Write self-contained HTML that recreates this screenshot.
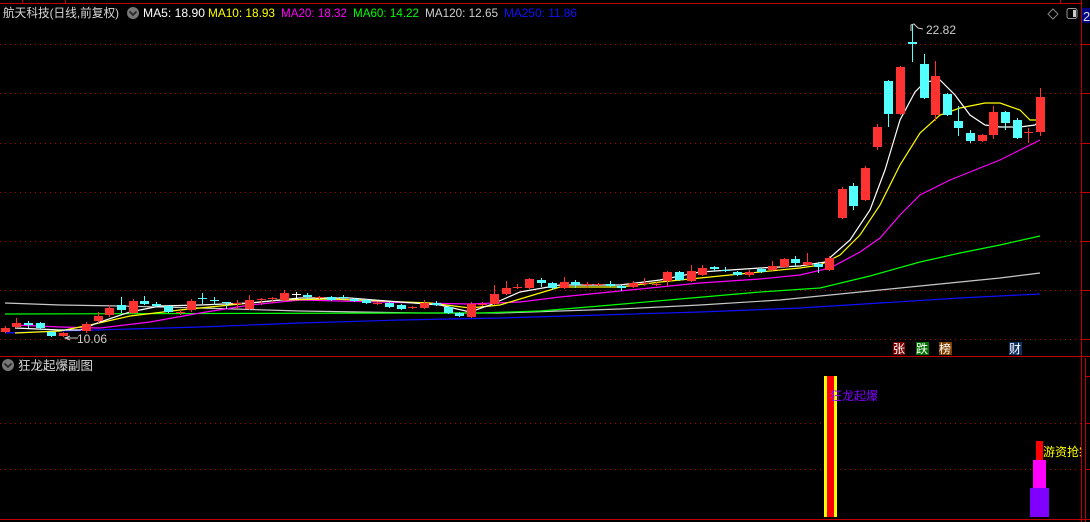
<!DOCTYPE html>
<html><head><meta charset="utf-8"><style>
html,body{margin:0;padding:0;background:#000;width:1090px;height:522px;overflow:hidden}
svg{display:block}
text{font-family:"Liberation Sans","Noto Sans CJK SC",sans-serif}
</style></head><body>
<svg id="s" width="1090" height="522" xmlns="http://www.w3.org/2000/svg">
<rect width="1090" height="522" fill="#000"/>
<g stroke="#c00000" stroke-width="1" fill="none">
<line x1="0" y1="3.5" x2="1081" y2="3.5"/>
<line x1="1081.5" y1="0" x2="1081.5" y2="522"/>
<line x1="0" y1="356.5" x2="1090" y2="356.5"/>
<line x1="0" y1="519.5" x2="1090" y2="519.5"/>
<line x1="1085.5" y1="358" x2="1085.5" y2="522"/>
</g>
<g stroke="#b00000" stroke-dasharray="1,4" stroke-width="1">
<line x1="0" y1="44.5" x2="1081" y2="44.5"/>
<line x1="0" y1="93.5" x2="1081" y2="93.5"/>
<line x1="0" y1="143.5" x2="1081" y2="143.5"/>
<line x1="0" y1="192.5" x2="1081" y2="192.5"/>
<line x1="0" y1="241.5" x2="1081" y2="241.5"/>
<line x1="0" y1="290.5" x2="1081" y2="290.5"/>
<line x1="0" y1="339.5" x2="1081" y2="339.5"/>
<line x1="0" y1="423.5" x2="1081" y2="423.5"/>
<line x1="0" y1="469.5" x2="1081" y2="469.5"/>
</g>
<g stroke="#c00000">
<line x1="1082" y1="44.5" x2="1090" y2="44.5"/><line x1="1082" y1="93.5" x2="1090" y2="93.5"/>
<line x1="1082" y1="143.5" x2="1090" y2="143.5"/><line x1="1082" y1="192.5" x2="1090" y2="192.5"/>
<line x1="1082" y1="241.5" x2="1090" y2="241.5"/><line x1="1082" y1="290.5" x2="1090" y2="290.5"/>
<line x1="1082" y1="339.5" x2="1090" y2="339.5"/><line x1="1086" y1="376.5" x2="1090" y2="376.5"/>
<line x1="1086" y1="423.5" x2="1090" y2="423.5"/><line x1="1086" y1="469.5" x2="1090" y2="469.5"/>
<line x1="22.5" y1="0" x2="22.5" y2="3"/><line x1="65.5" y1="0" x2="65.5" y2="3"/>
<line x1="1060.5" y1="0" x2="1060.5" y2="3"/>
</g>
<g id="ma" fill="none" stroke-width="1.2"></g>
<g id="cd"></g>
<!-- header -->
<text x="3" y="17" font-size="12" fill="#d8d8d8" textLength="116" lengthAdjust="spacingAndGlyphs">航天科技(日线,前复权)</text>
<circle cx="133" cy="13" r="6" fill="#777"/>
<path d="M129.5 11.5 L133 15 L136.5 11.5" stroke="#222" stroke-width="1.6" fill="none"/>
<text x="143" y="17" font-size="12" fill="#fff" textLength="62" lengthAdjust="spacingAndGlyphs">MA5: 18.90</text>
<text x="208" y="17" font-size="12" fill="#ffff00" textLength="67" lengthAdjust="spacingAndGlyphs">MA10: 18.93</text>
<text x="281" y="17" font-size="12" fill="#ff00ff" textLength="66" lengthAdjust="spacingAndGlyphs">MA20: 18.32</text>
<text x="353" y="17" font-size="12" fill="#00ff00" textLength="66" lengthAdjust="spacingAndGlyphs">MA60: 14.22</text>
<text x="425" y="17" font-size="12" fill="#d0d0d0" textLength="73" lengthAdjust="spacingAndGlyphs">MA120: 12.65</text>
<text x="504" y="17" font-size="12" fill="#1010ff" textLength="73" lengthAdjust="spacingAndGlyphs">MA250: 11.86</text>
<!-- top right icons -->
<path d="M1053 9 L1058 14 L1053 19 L1048 14 Z" stroke="#888" fill="none"/>
<rect x="1067" y="8.5" width="10" height="10" rx="2" stroke="#999" fill="none"/>
<rect x="1073" y="10" width="3" height="7" fill="#ccc"/>
<rect x="1082" y="8" width="8" height="15" fill="#000080"/>
<text x="1083" y="21" font-size="13" fill="#ddd">2</text>
<!-- labels -->
<path d="M911 31 L911 25 L914 24 L918 28 L923 29" stroke="#ccc" fill="none"/>
<text x="926" y="34" font-size="12" fill="#ccc">22.82</text>
<path d="M70 336 L65 338 L70 340 M65 338 L78 338" stroke="#ccc" fill="none"/>
<text x="77" y="343" font-size="12" fill="#ccc">10.06</text>
<!-- badges -->
<rect x="893" y="342" width="12" height="13" fill="#800000"/><text x="893" y="353" font-size="12" fill="#fff">张</text>
<rect x="916" y="342" width="13" height="13" fill="#007000"/><text x="916" y="353" font-size="12" fill="#fff">跌</text>
<rect x="939" y="342" width="13" height="13" fill="#804000"/><text x="939" y="353" font-size="12" fill="#fff">榜</text>
<rect x="1009" y="342" width="13" height="13" fill="#103060"/><text x="1009" y="353" font-size="12" fill="#fff">财</text>
<!-- sub panel -->
<circle cx="8" cy="365" r="6" fill="#777"/>
<path d="M4.5 363.5 L8 367 L11.5 363.5" stroke="#222" stroke-width="1.6" fill="none"/>
<text x="18" y="370" font-size="12.5" fill="#d8d8d8">狂龙起爆副图</text>
<rect x="824" y="376" width="13" height="141" fill="#ffff00"/>
<rect x="827" y="376" width="7" height="141" fill="#ff0000"/>
<text x="830" y="400" font-size="12" fill="#8000ff">狂龙起爆</text>
<rect x="1036" y="441" width="7" height="20" fill="#ff0000"/>
<rect x="1033" y="460" width="13" height="29" fill="#ff00ff"/>
<rect x="1030" y="488" width="19" height="29" fill="#8000ff"/>
<svg x="0" y="0" width="1081" height="522"><text x="1043" y="456" font-size="12" fill="#ffff00">游资抢筹</text></svg>
</svg>
<script>
var NS="http://www.w3.org/2000/svg";
function poly(pts,c){var p=document.createElementNS(NS,"polyline");p.setAttribute("points",pts.map(function(a){return a.join(",")}).join(" "));p.setAttribute("stroke",c);p.setAttribute("fill","none");p.setAttribute("stroke-width","1.2");document.getElementById("ma").appendChild(p);}
poly([[5,303],[60,305],[120,306],[200,308],[300,311],[420,313],[500,313],[560,311],[620,309],[700,305],[780,300],[840,294],[900,288],[960,282],[1000,278],[1040,273]],"#c8c8c8");
poly([[5,333],[60,331],[130,329],[200,327],[300,323],[400,320],[500,318],[600,315],[700,312],[800,308],[880,303],[960,298],[1040,294]],"#1010ff");
poly([[5,314],[420,313],[480,313],[540,311],[600,306],[680,299],[760,292],[820,288],[870,276],[920,262],[960,253],[1000,245],[1040,236]],"#00ff00");
poly([[15,325],[60,327],[100,328],[150,322],[200,313],[250,305],[300,300],[380,302],[420,303],[470,304],[520,302],[560,297],[620,291],[700,283],[760,279],[800,275],[830,268],[860,252],[880,238],[900,215],[920,195],[950,180],[980,168],[1000,160],[1020,150],[1040,140]],"#ff00ff");
poly([[15,333],[60,331],[90,325],[130,316],[180,310],[230,305],[280,300],[330,299],[380,301],[430,303],[470,308],[500,305],[530,296],[560,287],[620,287],[660,282],[700,278],[760,272],[800,268],[820,265],[840,255],[860,235],[880,205],[900,165],[920,133],[940,115],[960,108],[985,103],[1000,103],[1020,110],[1030,120],[1040,120]],"#ffff00");
poly([[15,328],[60,330],[80,330],[100,322],[130,312],[160,306],[200,305],[250,303],[300,298],[350,298],[400,302],[440,305],[470,312],[490,305],[520,292],[560,285],[620,285],[660,280],[700,272],[760,268],[800,266],[825,262],[850,240],[870,210],[885,170],[900,120],[915,92],[925,82],[940,80],[955,95],[970,115],[985,125],[1000,127],[1020,127],[1035,125],[1040,120]],"#ffffff");
var C=[[5,328,332,326,333,'r'],[16,323,327,318,328,'r'],[28,323,325,321,328,'c'],[40,323,328,322,330,'c'],[51,332,336,331,337,'c'],[63,333,336,332,337,'r'],[86,324,331,322,333,'r'],[98,316,321,312,323,'r'],[109,308,315,305,317,'r'],[121,305,310,297,313,'c'],[133,301,313,299,314,'r'],[144,301,304,296,305,'c'],[156,304,306,302,307,'c'],[168,306,312,305,313,'c'],[180,312,313,310,315,'r'],[191,301,310,299,312,'r'],[202,298,299,293,304,'c'],[214,300,301,297,305,'c'],[226,302,303,302,309,'c'],[237,303,304,300,309,'r'],[249,300,309,295,310,'r'],[261,299,300,298,305,'r'],[272,298,299,297,303,'r'],[284,293,300,290,301,'r'],[296,294,295,292,300,'w'],[307,295,297,293,299,'c'],[319,297,298,296,299,'r'],[331,297,300,296,301,'c'],[343,297,298,295,300,'c'],[354,299,301,298,302,'c'],[366,300,303,299,304,'c'],[377,303,304,302,305,'r'],[389,303,307,302,308,'c'],[401,305,309,304,310,'c'],[412,307,308,306,309,'r'],[424,303,308,300,309,'r'],[436,303,305,301,306,'c'],[448,307,313,306,314,'c'],[459,313,316,312,317,'c'],[471,304,317,302,318,'r'],[482,304,305,302,306,'r'],[494,294,304,285,305,'r'],[506,288,294,281,295,'r'],[517,287,288,284,289,'r'],[529,279,288,278,289,'r'],[541,280,283,278,287,'c'],[552,283,288,282,290,'c'],[564,282,288,277,289,'r'],[575,282,285,280,288,'c'],[587,284,285,282,288,'r'],[598,284,285,283,286,'r'],[610,284,286,281,287,'c'],[621,286,288,285,291,'c'],[633,283,287,281,288,'r'],[644,283,284,278,286,'r'],[656,284,285,282,286,'r'],[667,272,281,271,286,'r'],[679,272,280,271,281,'c'],[691,271,281,265,282,'r'],[702,268,275,265,276,'r'],[714,267,269,266,271,'c'],[725,270,271,267,272,'c'],[737,272,275,271,276,'c'],[749,272,275,270,277,'r'],[761,269,272,268,273,'c'],[772,266,270,261,271,'r'],[784,259,267,258,268,'r'],[795,259,263,256,266,'c'],[807,262,265,253,266,'r'],[818,264,267,262,273,'c'],[829,258,270,256,271,'r'],[830,225,253,224,254,'r'],[842,189,218,187,219,'r'],[853,186,206,183,210,'c'],[865,168,200,166,201,'r'],[877,127,147,124,150,'r'],[888,81,114,80,127,'c'],[900,67,114,66,115,'r'],[912,42,44,25,62,'c'],[924,64,98,54,99,'c'],[935,76,115,61,121,'r'],[947,94,115,93,116,'c'],[958,121,128,106,136,'c'],[970,133,141,130,143,'c'],[982,135,141,134,142,'r'],[993,112,135,106,139,'r'],[1005,112,123,111,130,'c'],[1017,120,138,118,139,'c'],[1028,132,133,128,143,'r'],[1040,97,132,88,136,'r']];
var g=document.getElementById("cd"),h="";
C.forEach(function(d,i){if(i==71)return;var col=d[5]=='r'?'#ff3232':(d[5]=='c'?'#54ffff':'#ffffff');
h+='<line x1="'+(d[0]+.5)+'" y1="'+d[3]+'" x2="'+(d[0]+.5)+'" y2="'+d[4]+'" stroke="'+col+'"/>';
h+='<rect x="'+(d[0]-4)+'" y="'+d[1]+'" width="9" height="'+Math.max(1,d[2]-d[1])+'" fill="'+col+'"/>';});
g.innerHTML=h;
</script>
</body></html>
